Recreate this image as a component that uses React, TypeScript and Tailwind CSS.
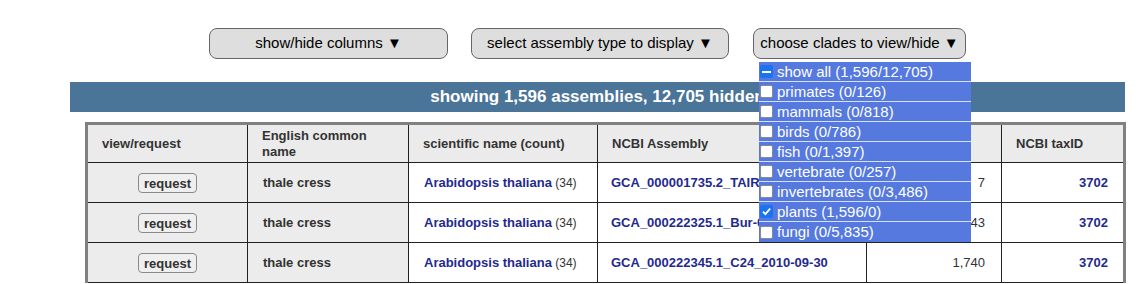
import React from "react";

const LINK = "text-[#1f2a8f]";

function Check({ kind }: { kind: "none" | "check" | "dash" }) {
  if (kind === "none")
    return <span className="inline-block w-[13px] h-[13px] bg-white border border-[#8a8a8a] rounded-[2px] shrink-0" />;
  return (
    <span className="inline-flex items-center justify-center w-[13px] h-[13px] bg-[#1a73f0] rounded-[2px] shrink-0">
      {kind === "dash" ? (
        <span className="block w-[9px] h-[2px] bg-white" />
      ) : (
        <svg width="11" height="11" viewBox="0 0 10 10">
          <path d="M1.8 5.2 L4 7.4 L8.3 2.4" fill="none" stroke="white" strokeWidth="1.6" />
        </svg>
      )}
    </span>
  );
}

const clades: { label: string; kind: "none" | "check" | "dash" }[] = [
  { label: "show all (1,596/12,705)", kind: "dash" },
  { label: "primates (0/126)", kind: "none" },
  { label: "mammals (0/818)", kind: "none" },
  { label: "birds (0/786)", kind: "none" },
  { label: "fish (0/1,397)", kind: "none" },
  { label: "vertebrate (0/257)", kind: "none" },
  { label: "invertebrates (0/3,486)", kind: "none" },
  { label: "plants (1,596/0)", kind: "check" },
  { label: "fungi (0/5,835)", kind: "none" },
];

const rows = [
  { asm: "GCA_000001735.2_TAIR10.1", n: "7" },
  { asm: "GCA_000222325.1_Bur-0_2010-09-30", n: "43" },
  { asm: "GCA_000222345.1_C24_2010-09-30", n: "1,740" },
];

const W = ["w-[160px]", "w-[161px]", "w-[189px]", "w-[269px]", "w-[135px]", "w-[121px]"];

export default function App() {
  return (
    <div
      className="w-[1143px] h-[284px] overflow-hidden bg-white text-[#333]"
      style={{ fontFamily: '"Liberation Sans", Arial, Helvetica, sans-serif' }}
    >
      <div className="flex pt-[28px] pl-[209px] gap-[23px]">
        <button className="w-[239px] h-[31px] bg-[#dedede] border border-[#666] rounded-[8px] text-[15px] text-black">
          show/hide columns ▼
        </button>
        <button className="w-[258px] h-[31px] bg-[#dedede] border border-[#666] rounded-[8px] text-[15px] text-black">
          select assembly type to display ▼
        </button>
        <div className="relative ml-[1px]">
          <button className="w-[213px] h-[31px] bg-[#dedede] border border-[#666] rounded-[8px] text-[15px] text-black whitespace-nowrap">
            choose clades to view/hide ▼
          </button>
          <div className="absolute left-[6px] top-[34px] w-[212px] z-10 flex flex-col">
            {clades.map((c, i) => (
              <div
                key={c.label}
                className={`h-[20px] bg-[#5579de] flex items-center gap-[4px] pl-[1px] text-white text-[15px] whitespace-nowrap overflow-hidden ${
                  i < clades.length - 1 ? "border-b border-[#d8e0f6]" : ""
                }`}
              >
                <Check kind={c.kind} />
                <span className="leading-[18px]">{c.label}</span>
              </div>
            ))}
          </div>
        </div>
      </div>

      <div className="mt-[23px] ml-[70px] w-[1055px] h-[30px] bg-[#4b7499] flex items-center justify-center text-white font-bold text-[17px]">
        showing 1,596 assemblies, 12,705 hidden
      </div>

      <div className="mt-[10px] ml-[85px] w-[1041px] border-[3px] border-b-0 border-[#808080] text-[13px]">
        <div className="flex h-[38px] bg-[#ebebeb] font-bold text-[#333]">
          {["view/request", "English common name", "scientific name (count)", "NCBI Assembly", "", "NCBI taxID"].map(
            (h, i) => (
              <div
                key={i}
                className={`${W[i]} h-full flex items-center px-[14px] leading-[16px] border-b border-[#222] ${
                  i < 5 ? "border-r" : ""
                }`}
              >
                {i === 1 ? (
                  <span>
                    English common
                    <br />
                    name
                  </span>
                ) : (
                  h
                )}
              </div>
            )
          )}
        </div>
        {rows.map((r) => (
          <div key={r.asm} className="flex h-[40px]">
            <div className={`${W[0]} h-full bg-[#ececec] flex items-center justify-center border-r border-b border-[#222] pt-[1px]`}>
              <button className="h-[20px] px-[5px] bg-[#efefef] border border-[#8a8a8a] rounded-[4px] font-bold text-[13px] text-[#333] leading-none">
                request
              </button>
            </div>
            <div className={`${W[1]} h-full bg-[#ececec] flex items-center px-[15px] pt-[1px] font-bold border-r border-b border-[#222]`}>
              thale cress
            </div>
            <div className={`${W[2]} h-full flex items-center px-[15px] pt-[1px] border-r border-b border-[#222] whitespace-nowrap`}>
              <span className={`${LINK} font-bold`}>Arabidopsis thaliana</span>
              <span className="text-[12px]">&nbsp;(34)</span>
            </div>
            <div className={`${W[3]} h-full flex items-center px-[13px] pt-[1px] border-r border-b border-[#222] whitespace-nowrap overflow-hidden`}>
              <span className={`${LINK} font-bold`}>{r.asm}</span>
            </div>
            <div className={`${W[4]} h-full flex items-center justify-end pr-[16px] pt-[1px] border-r border-b border-[#222]`}>
              {r.n}
            </div>
            <div className={`${W[5]} h-full flex items-center justify-end pr-[15px] pt-[1px] border-b border-[#222]`}>
              <span className={`${LINK} font-bold`}>3702</span>
            </div>
          </div>
        ))}
      </div>
    </div>
  );
}
